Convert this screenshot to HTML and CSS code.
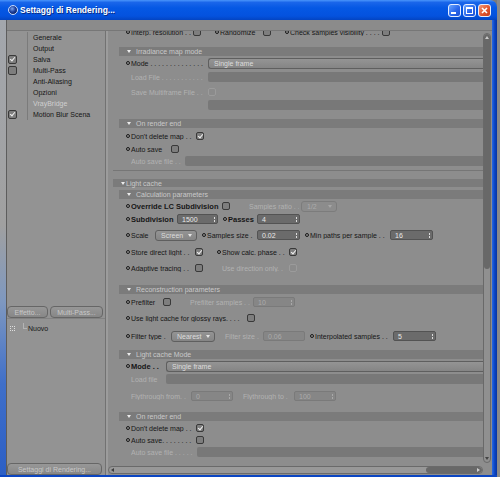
FILE: index.html
```html
<!DOCTYPE html>
<html lang="it">
<head>
    <meta charset="UTF-8">
    <title>Settaggi di Rendering...</title>
    <link rel="stylesheet" href="styles.css">
</head>
<body>
<div class="screen">
    <div class="window">
        <div class="titlebar">
            <span class="app-icon"></span>
            <span class="title">Settaggi di Rendering...</span>
            <div class="caption-btns">
                <span class="cbtn"><svg width="13" height="13" viewBox="0 0 13 13"><rect x="3" y="8" width="5" height="2" fill="#fff"/></svg></span>
                <span class="cbtn"><svg width="13" height="13" viewBox="0 0 13 13"><rect x="3.5" y="3.5" width="6" height="6" fill="none" stroke="#fff"/><rect x="3" y="3" width="7" height="2" fill="#fff"/></svg></span>
                <span class="cbtn close"><svg width="13" height="13" viewBox="0 0 13 13"><path d="M4 4 L9 9 M9 4 L4 9" stroke="#fff" stroke-width="1.6"/></svg></span>
            </div>
        </div>
        <div class="frame">
            <div class="left-edge"></div>
            <div class="main">
                <div class="toolbar"><span class="grip"></span></div>
                <div class="body">
                    <aside class="sidebar">
                        <ul class="tree">
                            <li><span class="slot"></span><span class="name">Generale</span></li>
                            <li><span class="slot"></span><span class="name">Output</span></li>
                            <li><span class="slot"><span class="cb on"></span></span><span class="name">Salva</span></li>
                            <li><span class="slot"><span class="cb"></span></span><span class="name">Multi-Pass</span></li>
                            <li><span class="slot"></span><span class="name">Anti-Aliasing</span></li>
                            <li><span class="slot"></span><span class="name">Opzioni</span></li>
                            <li><span class="slot"></span><span class="name off">VrayBridge</span></li>
                            <li><span class="slot"><span class="cb on"></span></span><span class="name">Motion Blur Scena</span></li>
                        </ul>
                        <div class="sb-buttons">
                            <button class="sb-btn fx">Effetto...</button>
                            <button class="sb-btn mp">Multi-Pass...</button>
                        </div>
                        <div class="effects">
                            <div class="effect"><span class="fx-icon"></span><span class="branch"></span>Nuovo</div>
                        </div>
                        <button class="sb-btn main-btn">Settaggi di Rendering...</button>
                    </aside>
                    <div class="divider"></div>
                    <section class="panel">
                        <div class="viewport">
                            <div class="content">
                                <div class="section first">
                                    <div class="sub">
                                        <div class="row r12">
                                            <span class="dot"></span><span class="lbl w62">Interp. resolution . .</span><span class="cb"></span>
                                            <span class="dot"></span><span class="lbl w43">Randomize</span><span class="cb"></span>
                                            <span class="dot"></span><span class="lbl w92">Check samples visibility . . . .</span><span class="cb"></span>
                                        </div>
                                    </div>
                                    <div class="sub mt9">
                                        <div class="hdr">Irradiance map mode</div>
                                        <div class="row r14"><span class="dot"></span><span class="lbl w77">Mode . . . . . . . . . . . . . .</span><span class="dd wide">Single frame</span></div>
                                        <div class="row r14"><span class="dot none"></span><span class="lbl off w77">Load File . . . . . . . . . . .</span><span class="fld grow"></span></div>
                                        <div class="row r16"><span class="dot none"></span><span class="lbl off w77">Save Multiframe File . .</span><span class="cb off"></span></div>
                                        <div class="row r10"><span class="dot none"></span><span class="lbl w77"></span><span class="fld grow"></span></div>
                                    </div>
                                    <div class="sub mt9">
                                        <div class="hdr">On render end</div>
                                        <div class="rows">
                                            <div class="row r14"><span class="dot"></span><span class="lbl w65">Don't delete map . .</span><span class="cb on"></span></div>
                                            <div class="row r12"><span class="dot"></span><span class="lbl w40">Auto save</span><span class="cb"></span></div>
                                            <div class="row r12"><span class="dot none"></span><span class="lbl off w54">Auto save file . .</span><span class="fld grow"></span></div>
                                        </div>
                                    </div>
                                </div>
                                <div class="section">
                                    <div class="hdr top">Light cache</div>
                                    <div class="sub mt3">
                                        <div class="hdr">Calculation parameters</div>
                                        <div class="rows">
                                            <div class="row r12">
                                                <span class="dot"></span><span class="lbl b w91">Override LC Subdivision</span><span class="cb"></span>
                                                <span class="dot none"></span><span class="lbl off w52">Samples ratio . .</span><span class="dd off sz36">1/2</span>
                                            </div>
                                            <div class="row r14">
                                                <span class="dot"></span><span class="lbl b w46">Subdivision</span><span class="spin sz41">1500</span>
                                                <span class="dot"></span><span class="lbl b w29">Passes</span><span class="spin sz43">4</span>
                                            </div>
                                            <div class="row r18">
                                                <span class="dot"></span><span class="lbl w24">Scale</span><span class="dd sz42">Screen</span>
                                                <span class="dot"></span><span class="lbl w50">Samples size .</span><span class="spin sz43">0.02</span>
                                                <span class="dot"></span><span class="lbl w80">Min paths per sample . .</span><span class="spin sz43">16</span>
                                            </div>
                                            <div class="row r16">
                                                <span class="dot"></span><span class="lbl w64">Store direct light . .</span><span class="cb on"></span>
                                                <span class="dot"></span><span class="lbl w67">Show calc. phase . .</span><span class="cb on"></span>
                                            </div>
                                            <div class="row r16">
                                                <span class="dot"></span><span class="lbl w64">Adaptive tracing . .</span><span class="cb"></span>
                                                <span class="dot none"></span><span class="lbl off w67">Use direction only. .</span><span class="cb off"></span>
                                            </div>
                                        </div>
                                    </div>
                                    <div class="sub mt9">
                                        <div class="hdr">Reconstruction parameters</div>
                                        <div class="rows">
                                            <div class="row r14">
                                                <span class="dot"></span><span class="lbl w32">Prefilter</span><span class="cb"></span>
                                                <span class="dot none"></span><span class="lbl off w63">Prefilter samples . .</span><span class="spin off sz42">10</span>
                                            </div>
                                            <div class="row r18">
                                                <span class="dot"></span><span class="lbl w116">Use light cache for glossy rays. . . .</span><span class="cb"></span>
                                            </div>
                                            <div class="row r18">
                                                <span class="dot"></span><span class="lbl w40">Filter type .</span><span class="dd sz44">Nearest</span>
                                                <span class="dot none"></span><span class="lbl off w38">Filter size .</span><span class="spin off plain sz42">0.06</span>
                                                <span class="dot"></span><span class="lbl w78">Interpolated samples . .</span><span class="spin sz43">5</span>
                                            </div>
                                        </div>
                                    </div>
                                    <div class="sub mt5">
                                        <div class="hdr">Light cache Mode</div>
                                        <div class="rows">
                                            <div class="row r12"><span class="dot"></span><span class="lbl b w35">Mode . .</span><span class="dd wide">Single frame</span></div>
                                            <div class="row r14"><span class="dot none"></span><span class="lbl off w35">Load file</span><span class="fld grow"></span></div>
                                            <div class="row r20">
                                                <span class="dot none"></span><span class="lbl off w60">Flythrough from. .</span><span class="spin off sz42">0</span>
                                                <span class="dot none"></span><span class="lbl off w51">Flythrough to .</span><span class="spin off sz42">100</span>
                                            </div>
                                        </div>
                                    </div>
                                    <div class="sub mt6">
                                        <div class="hdr">On render end</div>
                                        <div class="rows">
                                            <div class="row r12"><span class="dot"></span><span class="lbl w65">Don't delete map . .</span><span class="cb on"></span></div>
                                            <div class="row r12"><span class="dot"></span><span class="lbl w65">Auto save. . . . . . . .</span><span class="cb"></span></div>
                                            <div class="row r12"><span class="dot none"></span><span class="lbl off w66">Auto save file . . . . .</span><span class="fld grow"></span></div>
                                        </div>
                                    </div>
                                </div>
                            </div>
                            <div class="vscroll">
                                <div class="vtrack">
                                    <div class="vthumb"><span class="arr-up"></span></div>
                                    <span class="arr-down"></span>
                                </div>
                            </div>
                        </div>
                        <div class="hscroll">
                            <div class="htrack">
                                <span class="arr-left"></span>
                                <div class="hthumb"><span class="arr-right"></span></div>
                            </div>
                        </div>
                    </section>
                </div>
            </div>
            <div class="win-right"></div>
        </div>
        <div class="win-bottom"></div>
    </div>
    <div class="outside"></div>
</div>
</body>
</html>
```

FILE: styles.css
```css
*{
    margin: 0;
    padding: 0;
    box-sizing: border-box;
}
body {
    background: #7a7a7a;
    font-family: "Liberation Sans", Arial, sans-serif;
    font-size: 7px;
    color: #161616;
}
.screen {
    display: flex;
    width: 500px;
    height: 477px;
    overflow: hidden;
}
.window {
    width: 497px;
    height: 477px;
    display: flex;
    flex-direction: column;
}

/* xp caption */
.titlebar {
    height: 20px;
    flex: none;
    display: flex;
    align-items: center;
    padding-left: 8px;
    border-top-right-radius: 7px;
    background: linear-gradient(#4a95fb 0, #1a66ea 12%, #0558e4 40%, #0452de 80%, #0344c2 100%);
}
.app-icon {
    width: 10px;
    height: 10px;
    border-radius: 50%;
    border: 1px solid #c9dafc;
    background: radial-gradient(circle at 40% 35%, #7ea6ee 0, #1d3f9c 45%, #0b1c55 85%);
}
.title {
    margin-left: 2px;
    color: #fff;
    font-weight: bold;
    font-size: 8.5px;
    text-shadow: 1px 1px 0 #0b2c84;
}
.caption-btns {
    margin-left: auto;
    margin-right: 6px;
    display: flex;
    gap: 2px;
}
.cbtn {
    width: 13px;
    height: 13px;
    border: 1px solid #e6eeff;
    border-radius: 3px;
    background: linear-gradient(135deg, #6aa6ff, #2a67ec 55%, #1c50d2);
    display: flex;
    align-items: center;
    justify-content: center;
    overflow: hidden;
}
.cbtn svg {
    flex: none;
}
.cbtn.close {
    background: linear-gradient(135deg, #f29a78, #e2572f 55%, #c63d1b);
}

.frame {
    height: 455px;
    display: flex;
}
.left-edge {
    width: 7px;
    border-right: 1px solid #5d5d5d;
    background: linear-gradient(#a3a7ad 0, #a0a0a0 45%, #7e98c0 62%, #3f6fc9 80%, #2c5fc6 100%);
}
.win-right {
    width: 5px;
    background: linear-gradient(to right, #2a6ae6, #0b47c6 50%, #0833a2);
}
.win-bottom {
    height: 2px;
    background: #0b45c2;
}
.outside {
    width: 3px;
    background: #8a8a8a;
}
.main {
    width: 485px;
    display: flex;
    flex-direction: column;
}
.toolbar {
    height: 11px;
    flex: none;
    background: #8b8b8b;
    border-bottom: 1px solid #777;
    padding: 2px 0 0 3px;
}
.grip {
    display: block;
    width: 7px;
    height: 6px;
    background-image: radial-gradient(#b9b9b9 45%, transparent 50%);
    background-size: 2px 2px;
}
.body {
    height: 444px;
    display: flex;
}

/* left list */
.sidebar {
    width: 98px;
    display: flex;
    flex-direction: column;
    background: #939393;
}
.tree {
    flex: 1;
    list-style: none;
    padding-top: 1px;
}
.tree li {
    height: 11px;
    display: flex;
}
.slot {
    width: 9px;
    margin-left: 1px;
    display: flex;
    align-items: center;
}
.slot .cb {
    width: 9px;
    height: 9px;
    margin-right: 0;
}
.name {
    margin-left: 10px;
    border-left: 1px solid #7b7b7b;
    padding-left: 5px;
    display: flex;
    align-items: center;
    white-space: nowrap;
}
.name.off {
    color: #cfcfcf;
}
.sb-buttons {
    height: 12px;
    flex: none;
    display: flex;
    gap: 2px;
}
.sb-btn {
    height: 12px;
    border: 1px solid #666;
    border-radius: 4px;
    background: linear-gradient(#979797, #878787);
    color: #c8c8c8;
    font-family: "Liberation Sans", Arial, sans-serif;
    font-size: 7px;
}
.sb-btn.fx {
    width: 41px;
}
.sb-btn.mp {
    width: 53px;
}
.effects {
    height: 144px;
    flex: none;
    border-top: 1px solid #828282;
    padding-top: 2px;
}
.effect {
    height: 15px;
    display: flex;
    align-items: center;
    padding-left: 3px;
}
.fx-icon {
    width: 5px;
    height: 5px;
    border: 1px dotted #dedede;
    margin-right: 8px;
}
.branch {
    width: 4px;
    height: 6px;
    border-left: 1px solid #b4b4b4;
    border-bottom: 1px solid #b4b4b4;
    margin: -5px 1px 0 0;
}
.sb-btn.main-btn {
    width: 95px;
    margin-top: 1px;
    flex: none;
}
.divider {
    width: 3px;
    border-left: 1px solid #727272;
    background: #9c9c9c;
}

/* settings panel */
.panel {
    width: 384px;
    display: flex;
    flex-direction: column;
    background: #8d8d8d;
}
.viewport {
    height: 434px;
    display: flex;
}
.content {
    width: 375px;
    overflow: hidden;
    padding-left: 5px;
}
.section.first {
    margin-top: -5px;
    padding-bottom: 3px;
    border-bottom: 1px solid #767676;
}
.section + .section {
    margin-top: 8px;
}
.sub {
    margin-left: 6px;
}
.mt3 { margin-top: 3px; }
.mt5 { margin-top: 5px; }
.mt6 { margin-top: 6px; }
.mt9 { margin-top: 9px; }
.hdr {
    height: 9px;
    display: flex;
    align-items: center;
    padding-left: 8px;
    background: #7b7b7b;
    color: #c9c9c9;
    white-space: nowrap;
}
.hdr::before {
    content: "";
    border-left: 2.5px solid transparent;
    border-right: 2.5px solid transparent;
    border-top: 3px solid #ececec;
    margin-right: 5px;
}
.hdr.top {
    height: 8px;
}
.hdr.top::before {
    margin-right: 1px;
}
.rows {
    padding-top: 1px;
}
.row {
    display: flex;
    align-items: center;
    padding-left: 7px;
    white-space: nowrap;
}
.r10 { height: 10px; }
.r12 { height: 12px; }
.r14 { height: 14px; }
.r16 { height: 16px; }
.r18 { height: 18px; }
.r20 { height: 20px; }
.dot {
    flex: none;
    width: 4px;
    height: 4px;
    border: 1px solid #1a1a1a;
    border-radius: 50%;
    margin-right: 1px;
}
.dot.none {
    visibility: hidden;
}
.lbl {
    flex: none;
    overflow: hidden;
    border-right: 2px solid transparent;
}
.lbl.off {
    color: #b2b2b2;
}
.lbl.b {
    font-weight: bold;
    font-size: 7.5px;
}
.w24 { width: 24px; }
.w29 { width: 29px; }
.w32 { width: 32px; }
.w35 { width: 35px; }
.w38 { width: 38px; }
.w40 { width: 40px; }
.w43 { width: 43px; }
.w46 { width: 46px; }
.w50 { width: 50px; }
.w51 { width: 51px; }
.w52 { width: 52px; }
.w54 { width: 54px; }
.w60 { width: 60px; }
.w62 { width: 62px; }
.w63 { width: 63px; }
.w64 { width: 64px; }
.w65 { width: 65px; }
.w66 { width: 66px; }
.w67 { width: 67px; }
.w77 { width: 77px; }
.w78 { width: 78px; }
.w80 { width: 80px; }
.w91 { width: 91px; }
.w92 { width: 92px; }
.w116 { width: 116px; }
.sz36 { width: 36px; }
.sz41 { width: 41px; }
.sz42 { width: 42px; }
.sz43 { width: 43px; }
.sz44 { width: 44px; }

.cb {
    flex: none;
    position: relative;
    width: 8px;
    height: 8px;
    border: 1px solid #393939;
    border-radius: 2px;
    background: #7e7e7e;
    margin-right: 14px;
}
.cb.on::after {
    content: "";
    position: absolute;
    left: 2px;
    top: 0;
    width: 2px;
    height: 4px;
    border: solid #f2f2f2;
    border-width: 0 1.5px 1.5px 0;
    transform: rotate(40deg);
}
.cb.off {
    border-color: #9b9b9b;
    background: #8b8b8b;
}
.dd {
    flex: none;
    height: 11px;
    display: flex;
    align-items: center;
    padding: 0 4px 0 5px;
    margin-right: 5px;
    border: 1px solid #5f5f5f;
    border-radius: 3px;
    background: linear-gradient(#949494, #858585);
    color: #dcdcdc;
}
.dd::after {
    content: "";
    margin-left: auto;
    border-left: 2.5px solid transparent;
    border-right: 2.5px solid transparent;
    border-top: 3px solid #e4e4e4;
}
.dd.wide {
    flex: 1;
    margin-right: 0;
    border-right: none;
    border-radius: 3px 0 0 3px;
}
.dd.wide::after {
    display: none;
}
.dd.off {
    color: #ababab;
    border-color: #7c7c7c;
    background: #8c8c8c;
}
.dd.off::after {
    border-top-color: #a6a6a6;
}
.spin {
    flex: none;
    height: 10px;
    display: flex;
    align-items: center;
    padding: 0 2px 0 4px;
    margin-right: 5px;
    border: 1px solid #535353;
    border-radius: 2px;
    background: #6b6b6b;
    color: #e8e8e8;
}
.spin::after {
    content: "";
    margin-left: auto;
    width: 1.5px;
    height: 5px;
    background: linear-gradient(#dcdcdc 0 2px, transparent 2px 3px, #dcdcdc 3px);
}
.spin.off {
    background: #868686;
    border-color: #7a7a7a;
    color: #ababab;
}
.spin.off::after {
    background: linear-gradient(#a9a9a9 0 2px, transparent 2px 3px, #a9a9a9 3px);
}
.spin.plain::after {
    display: none;
}
.fld {
    flex: none;
    height: 10px;
    border-radius: 2px 0 0 2px;
    background: #787878;
}
.fld.grow {
    flex: 1;
}

/* scrollbars */
.vscroll {
    width: 9px;
    flex: none;
    padding: 2px 1px 2px 0;
}
.vtrack {
    height: 100%;
    display: flex;
    flex-direction: column;
    justify-content: space-between;
    align-items: center;
    border: 1px solid #696969;
    border-radius: 4px;
    background: #909090;
    overflow: hidden;
}
.vthumb {
    width: 100%;
    height: 235px;
    display: flex;
    justify-content: center;
    padding-top: 2px;
    border-radius: 3px;
    background: #686868;
}
.arr-up {
    height: 0;
    border-left: 2px solid transparent;
    border-right: 2px solid transparent;
    border-bottom: 3px solid #c9c9c9;
}
.arr-down {
    height: 0;
    margin-bottom: 2px;
    border-left: 2px solid transparent;
    border-right: 2px solid transparent;
    border-top: 3px solid #444;
}
.hscroll {
    height: 10px;
    padding: 1px 9px 1px 0;
}
.htrack {
    height: 100%;
    display: flex;
    align-items: center;
    justify-content: space-between;
    border: 1px solid #6a6a6a;
    border-radius: 4px;
    background: #989898;
    overflow: hidden;
}
.arr-left {
    margin-left: 2px;
    border-top: 2px solid transparent;
    border-bottom: 2px solid transparent;
    border-right: 3px solid #3c3c3c;
}
.hthumb {
    width: 56px;
    height: 100%;
    display: flex;
    align-items: center;
    justify-content: flex-end;
    padding-right: 2px;
    border-radius: 3px;
    background: #686868;
}
.arr-right {
    border-top: 2px solid transparent;
    border-bottom: 2px solid transparent;
    border-left: 3px solid #d0d0d0;
}
```
